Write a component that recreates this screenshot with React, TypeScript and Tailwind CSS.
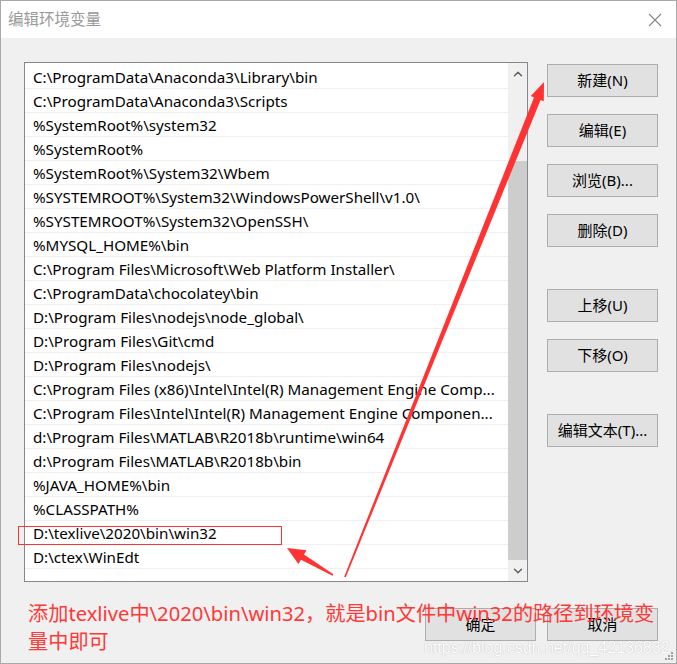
import { ChevronUp, ChevronDown } from "lucide-react";

const paths = [
  "C:\\ProgramData\\Anaconda3\\Library\\bin",
  "C:\\ProgramData\\Anaconda3\\Scripts",
  "%SystemRoot%\\system32",
  "%SystemRoot%",
  "%SystemRoot%\\System32\\Wbem",
  "%SYSTEMROOT%\\System32\\WindowsPowerShell\\v1.0\\",
  "%SYSTEMROOT%\\System32\\OpenSSH\\",
  "%MYSQL_HOME%\\bin",
  "C:\\Program Files\\Microsoft\\Web Platform Installer\\",
  "C:\\ProgramData\\chocolatey\\bin",
  "D:\\Program Files\\nodejs\\node_global\\",
  "D:\\Program Files\\Git\\cmd",
  "D:\\Program Files\\nodejs\\",
  "C:\\Program Files (x86)\\Intel\\Intel(R) Management Engine Comp...",
  "C:\\Program Files\\Intel\\Intel(R) Management Engine Componen...",
  "d:\\Program Files\\MATLAB\\R2018b\\runtime\\win64",
  "d:\\Program Files\\MATLAB\\R2018b\\bin",
  "%JAVA_HOME%\\bin",
  "%CLASSPATH%",
  "D:\\texlive\\2020\\bin\\win32",
  "D:\\ctex\\WinEdt",
];

const font = "font-['Microsoft_YaHei_UI','Noto_Sans','Noto_Sans_CJK_SC',sans-serif]";

function Btn({ label, className = "" }: { label: string; className?: string }) {
  return (
    <button
      className={`flex h-[33px] w-[111px] items-center justify-center border border-[#adadad] bg-[#e1e1e1] text-[15px] text-black ${className}`}
    >
      {label}
    </button>
  );
}

export default function App() {
  return (
    <div
      className={`relative flex h-[664px] w-[677px] flex-col overflow-hidden border border-[#a9a9a9] bg-[#f0f0f0] ${font}`}
    >
      {/* title bar */}
      <div className="flex h-[37px] items-center justify-between bg-white pl-[7px] pr-[14px]">
        <span className="text-[15.5px] text-[#999999]">编辑环境变量</span>
        <svg width="14" height="14" viewBox="0 0 14 14">
          <path d="M1 1L13 13M13 1L1 13" stroke="#8a8a8a" strokeWidth="1.2" />
        </svg>
      </div>

      <div className="flex flex-1 flex-col pl-[23px] pt-[24px]">
        <div className="flex gap-[19px]">
          {/* path list */}
          <div className="flex h-[520px] w-[504px] border border-[#828790] bg-white">
            <div className="flex-1 overflow-hidden pt-[2px]">
              {paths.map((p) => (
                <div
                  key={p}
                  className="flex h-6 items-center whitespace-nowrap border-b border-[#efefef] pl-[8px] pt-[1px] text-[15.2px] text-black"
                >
                  {p}
                </div>
              ))}
            </div>
            <div className="flex w-[19px] flex-col bg-[#f0f0f0]">
              <div className="flex h-[22px] items-center justify-center">
                <ChevronUp size={14} strokeWidth={2.5} className="text-[#606060]" />
              </div>
              <div className="h-[76px]" />
              <div className="flex-1 bg-[#cdcdcd]" />
              <div className="flex h-[21px] items-center justify-center">
                <ChevronDown size={14} strokeWidth={2.5} className="text-[#606060]" />
              </div>
            </div>
          </div>

          {/* buttons */}
          <div className="flex flex-col pt-[2px]">
            <Btn label="新建(N)" />
            <Btn label="编辑(E)" className="mt-[17px]" />
            <Btn label="浏览(B)..." className="mt-[17px]" />
            <Btn label="删除(D)" className="mt-[17px]" />
            <Btn label="上移(U)" className="mt-[42px]" />
            <Btn label="下移(O)" className="mt-[17px]" />
            <Btn label="编辑文本(T)..." className="mt-[42px]" />
          </div>
        </div>

        <div className="mt-[26px] flex justify-end gap-[11px] pr-[18px]">
          <Btn label="确定" />
          <Btn label="取消" />
        </div>
      </div>

      {/* annotation text */}
      <div className="absolute left-[27px] top-[598px] text-[20.2px] leading-[28px] text-[#ff3838]">
        添加texlive中\2020\bin\win32，就是bin文件中win32的路径到环境变
        <br />
        量中即可
      </div>

      {/* watermark */}
      <div className="absolute left-[423px] top-[635px] font-['Liberation_Sans',sans-serif] text-[16px] text-white [text-shadow:0_0_1px_#a8a8a8]">
        https://blog.csdn.net/qq_42136832
      </div>

      {/* resize grip */}
      <svg className="absolute bottom-[2px] right-[2px]" width="10" height="10" viewBox="0 0 10 10">
        <rect x="7" y="1" width="2" height="2" fill="#a0a0a0" />
        <rect x="4" y="4" width="2" height="2" fill="#a0a0a0" />
        <rect x="7" y="4" width="2" height="2" fill="#a0a0a0" />
        <rect x="1" y="7" width="2" height="2" fill="#a0a0a0" />
        <rect x="4" y="7" width="2" height="2" fill="#a0a0a0" />
        <rect x="7" y="7" width="2" height="2" fill="#a0a0a0" />
      </svg>

      {/* red markup */}
      <svg className="pointer-events-none absolute left-[-1px] top-[-1px]" width="677" height="664">
        <rect x="18.5" y="526.5" width="263" height="18" fill="none" stroke="#ff3333" strokeWidth="1" />
        <polygon
          fill="#ff3333"
          points="544,82 543.8,101.3 540.6,100 345.8,577.3 344.2,576.7 534,97.4 530.8,96.1"
        />
        <polygon
          fill="#ff3333"
          points="287,548 306.6,550.2 304,554.5 333.4,574.3 332.6,575.7 301,559.7 298.4,564"
        />
      </svg>
    </div>
  );
}
